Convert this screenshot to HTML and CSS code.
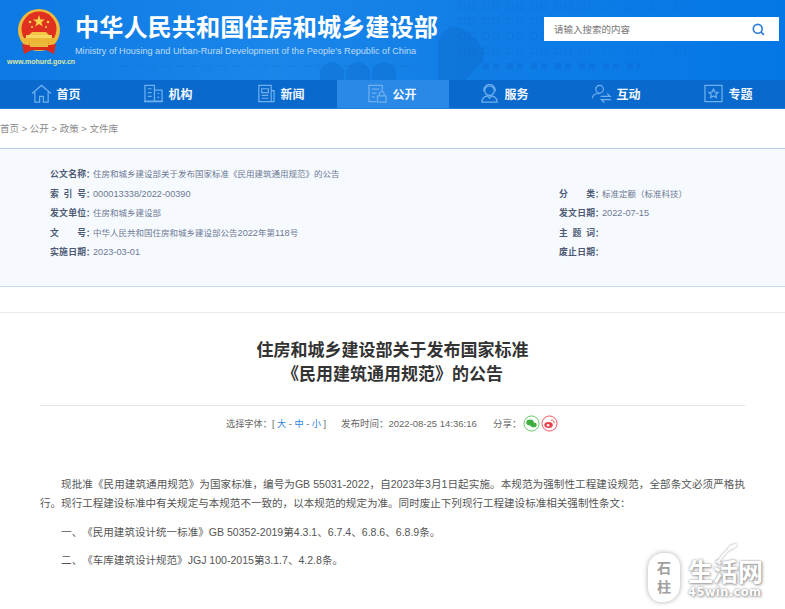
FILE: index.html
```html
<!DOCTYPE html>
<html lang="zh-CN">
<head>
<meta charset="utf-8">
<title>住房和城乡建设部关于发布国家标准《民用建筑通用规范》的公告</title>
<link rel="stylesheet" href="styles.css">
</head>
<body>
<header class="masthead">
  <svg class="skyline" viewBox="0 0 785 80" width="785" height="80" aria-hidden="true">
    <defs>
      <pattern id="win" x="0" y="0" width="24" height="15" patternUnits="userSpaceOnUse"><path d="M3 3h6v6H3zM13 3h6v6h-6z" fill="none" stroke="#0a66cf" stroke-width="1"/></pattern>
      <pattern id="win2" x="0" y="0" width="24" height="15" patternUnits="userSpaceOnUse"><path d="M3 3h6v6H3zM13 3h6v6h-6z" fill="#0a66cf"/></pattern>
    </defs>
    <rect x="456" y="2" width="120" height="54" fill="url(#win)" opacity=".3"/>
    <rect x="570" y="2" width="120" height="52" fill="url(#win)" opacity=".18"/>
    <rect x="480" y="56" width="160" height="14" fill="url(#win2)" opacity=".35"/>
    <path d="M438 80V42q8-20 22-14 14 6 22 20 6 12-6 20l-10 12z" fill="#0a62c4" opacity=".3"/>
    <path d="M320 80V70q6-8 12-8t12 8v10zM346 80V70q6-8 12-8t12 8v10zM372 80V70q6-8 12-8t12 8v10z" fill="#0a62c4" opacity=".3"/>
    <path d="M120 66h300" stroke="#0a62c4" stroke-width="1" stroke-dasharray="8 6" opacity=".2"/>
  </svg>
  <div class="brand">
    <div class="emblem-col">
      <svg class="emblem" viewBox="0 0 44 46" width="44" height="46">
        <circle cx="22" cy="21" r="21" fill="#efb93a"/>
        <circle cx="22" cy="20" r="17.500" fill="#e0301f"/>
        <polygon points="22,6 23.500,10.500 28,10.500 24.400,13.200 25.700,17.600 22,15 18.300,17.600 19.600,13.200 16,10.500 20.500,10.500" fill="#f6d34a"/>
        <circle cx="13" cy="13" r="1.300" fill="#f6d34a"/>
        <circle cx="31" cy="13" r="1.300" fill="#f6d34a"/>
        <circle cx="15" cy="18" r="1.100" fill="#f6d34a"/>
        <circle cx="29" cy="18" r="1.100" fill="#f6d34a"/>
        <path d="M15 23h14l3 3H12z" fill="#f3c445"/>
        <path d="M9 26h26v3H9z" fill="#f6d860"/>
        <path d="M7 29h30v5H7z" fill="#ecb534"/>
        <path d="M5 35l9 1.500h16l9-1.500-2 10-8-4H15l-8 4z" fill="#d92a1c"/>
        <path d="M13 34h18v4H13z" fill="#eab93c"/>
      </svg>
      <span class="site-url">www.mohurd.gov.cn</span>
    </div>
    <div class="brand-text">
      <div class="brand-zh">中华人民共和国住房和城乡建设部</div>
      <div class="brand-en">Ministry of Housing and Urban-Rural Development of the People's Republic of China</div>
    </div>
  </div>
  <div class="search">
    <span class="search-hint">请输入搜索的内容</span>
    <svg class="search-icon" viewBox="0 0 14 14" width="13" height="13"><circle cx="6.200" cy="6.200" r="4.800" fill="none" stroke="#2f7fd8" stroke-width="1.800"/><path d="M9.800 9.800l3 3" stroke="#2f7fd8" stroke-width="1.800"/></svg>
  </div>
</header>
<nav class="nav">
  <a class="nav-item"><svg class="nav-icon" viewBox="0 0 22 20"><path d="M1 10L11 1.500 21 10M4 8.500V19h5v-6h4v6h5V8.500" /></svg><span>首页</span></a>
  <a class="nav-item"><svg class="nav-icon" viewBox="0 0 22 20"><path d="M2 1.500h10V18H2zM12 6.500h8V18h-8M1 18.500h20M5 5h4M5 9h4M5 13h4M15 10h2M15 14h2"/></svg><span>机构</span></a>
  <a class="nav-item"><svg class="nav-icon" viewBox="0 0 22 20"><path d="M4 1.500h13V18.500H4zM7 5h7v4H7zM7 12h7M7 15h7M17 7h3v11.500h-3"/></svg><span>新闻</span></a>
  <a class="nav-item nav-item-active"><svg class="nav-icon" viewBox="0 0 22 20"><path d="M10 18.500H2V1.500h14v7M5 5.500h8M5 9.500h5M5 13.500h3M11 12.500h9v6.500h-9zM13 12.500v-2a2.500 2.500 0 0 1 5 0v2"/></svg><span>公开</span></a>
  <a class="nav-item"><svg class="nav-icon" viewBox="0 0 22 20"><circle cx="11" cy="7" r="5"/><path d="M5 8V6.500a6 6 0 0 1 12 0V8M3 19c0-4 3-6 6-6.500l2 2.500 2-2.500c3 .5 6 2.500 6 6.500z"/></svg><span>服务</span></a>
  <a class="nav-item"><svg class="nav-icon" viewBox="0 0 22 20"><circle cx="9" cy="5.500" r="4"/><path d="M1.500 15c0-3 3-5 7.500-5M10 13h10l-3-3M21 16.500H11l3 3"/></svg><span>互动</span></a>
  <a class="nav-item"><svg class="nav-icon" viewBox="0 0 22 20"><path d="M2 1.500h18v17H2z"/><path d="M11 5.500l1.500 3 3.200.4-2.300 2.200.6 3.200-3-1.600-3 1.600.6-3.200-2.300-2.200 3.200-.4z"/></svg><span>专题</span></a>
</nav>
<div class="crumbs">首页 &gt; 公开 &gt; 政策 &gt; 文件库</div>
<section class="meta">
  <div class="meta-row"><span class="meta-label">公文名称</span><span class="meta-colon">：</span><span class="meta-value">住房和城乡建设部关于发布国家标准《民用建筑通用规范》的公告</span></div>
  <div class="meta-row meta-split">
    <div class="meta-cell-left"><span class="meta-label">索引号</span><span class="meta-colon">：</span><span class="meta-num">000013338/2022-00390</span></div>
    <div class="meta-cell-right"><span class="meta-label">分类</span><span class="meta-colon">：</span><span class="meta-value">标准定额（标准科技）</span></div>
  </div>
  <div class="meta-row meta-split">
    <div class="meta-cell-left"><span class="meta-label">发文单位</span><span class="meta-colon">：</span><span class="meta-value">住房和城乡建设部</span></div>
    <div class="meta-cell-right"><span class="meta-label">发文日期</span><span class="meta-colon">：</span><span class="meta-num">2022-07-15</span></div>
  </div>
  <div class="meta-row meta-split">
    <div class="meta-cell-left"><span class="meta-label">文号</span><span class="meta-colon">：</span><span class="meta-value">中华人民共和国住房和城乡建设部公告<span class="meta-num">2022</span>年第<span class="meta-num">118</span>号</span></div>
    <div class="meta-cell-right"><span class="meta-label">主题词</span><span class="meta-colon">：</span></div>
  </div>
  <div class="meta-row meta-split">
    <div class="meta-cell-left"><span class="meta-label">实施日期</span><span class="meta-colon">：</span><span class="meta-num">2023-03-01</span></div>
    <div class="meta-cell-right"><span class="meta-label">废止日期</span><span class="meta-colon">：</span></div>
  </div>
</section>
<div class="meta-gap"></div>
<main class="article">
  <h1 class="title">住房和城乡建设部关于发布国家标准<br>《民用建筑通用规范》的公告</h1>
  <div class="tools">
    <span class="tool tool-font">选择字体：[ <a class="size">大</a> - <a class="size">中</a> - <a class="size">小</a> ]</span>
    <span class="tool tool-date">发布时间：2022-08-25 14:36:16</span>
    <span class="tool share">分享：
      <svg class="share-icon" viewBox="0 0 18 18" width="17" height="17"><circle cx="9" cy="9" r="8" fill="#fff" stroke="#5cc25c"/><ellipse cx="7.500" cy="8" rx="4" ry="3.200" fill="#3fae3f"/><ellipse cx="11.200" cy="10.500" rx="3.300" ry="2.600" fill="#3fae3f"/></svg>
      <svg class="share-icon" viewBox="0 0 18 18" width="17" height="17"><circle cx="9" cy="9" r="8" fill="#fff" stroke="#ee4a55"/><ellipse cx="8" cy="10.500" rx="4.500" ry="3.200" fill="#e6404c"/><circle cx="7.500" cy="10.800" r="1.400" fill="#fff"/><path d="M10.500 5.500c2.300-.5 3.800 1 3.300 3.200" fill="none" stroke="#e8503a"/></svg>
    </span>
  </div>
  <p class="para">现批准《民用建筑通用规范》为国家标准，编号为GB 55031-2022，自2023年3月1日起实施。本规范为强制性工程建设规范，全部条文必须严格执行。现行工程建设标准中有关规定与本规范不一致的，以本规范的规定为准。同时废止下列现行工程建设标准相关强制性条文：</p>
  <p class="para">一、《民用建筑设计统一标准》GB 50352-2019第4.3.1、6.7.4、6.8.6、6.8.9条。</p>
  <p class="para">二、《车库建筑设计规范》JGJ 100-2015第3.1.7、4.2.8条。</p>
</main>
<div class="watermark">
  <div class="wm-stone"><span>石</span><span>柱</span></div>
  <div class="wm-text">
    <svg class="wm-sprig" viewBox="0 0 24 20" width="24" height="20"><path d="M4 19C8 14 11 8 20 3" fill="none" stroke="#fff" stroke-width="2"/><path d="M14 6c1-4 5-5 9-5-1 4-4 6-9 5z" fill="#fff"/></svg>
    <div class="wm-zh">生活网</div>
    <div class="wm-en">45win.com</div>
  </div>
</div>
</body>
</html>
```
FILE: styles.css
```css
* { box-sizing: border-box; }
html, body { margin: 0; padding: 0; }
body {
  width: 785px;
  height: 609px;
  overflow: hidden;
  position: relative;
  background: #fff;
  font-family: "Liberation Sans", "Noto Sans CJK SC", sans-serif;
  color: #555;
  text-spacing-trim: space-all;
}
.masthead {
  position: relative;
  height: 80px;
  display: flex;
  justify-content: space-between;
  background: linear-gradient(90deg, #0d7ae4 0%, #1a86ea 35%, #117ee6 60%, #0477e6 100%);
  padding: 8px 6px 0 6px;
}
.skyline { position: absolute; left: 0; top: 0; filter: blur(.7px); }
.brand { position: relative; display: flex; }
.emblem-col { width: 69px; display: flex; flex-direction: column; align-items: flex-start; }
.emblem { margin: 1px 0 0 11px; }
.site-url { font-size: 7px; line-height: 8px; font-weight: bold; color: #dbe8a6; margin: 3px 0 0 1px; white-space: nowrap; }
.brand-text { padding-top: 6px; }
.brand-zh { font-size: 24.200px; line-height: 28px; font-weight: bold; color: #fff; white-space: nowrap; }
.brand-en { font-size: 9.150px; line-height: 12px; margin-top: 3px; color: #bfdcf8; white-space: nowrap; }
.search {
  position: relative;
  width: 235px;
  height: 24px;
  margin: 9px 0 0;
  background: #fff;
  display: flex;
  align-items: center;
  justify-content: space-between;
  padding: 0 14px 0 10px;
}
.search-hint { font-size: 9.500px; color: #777; }
.nav {
  height: 29px;
  background: #0a69cc;
  border-bottom: 1px solid #2280df;
  display: grid;
  grid-template-columns: repeat(7, 112px);
  padding-left: 1px;
}
.nav-item {
  display: flex;
  align-items: center;
  justify-content: center;
  gap: 4px;
  padding: 0 2px 1px 0;
  color: #f2f8ff;
  font-size: 12px;
  font-weight: bold;
}
.nav-item-active { background: #2a88e6; }
.nav-icon {
  width: 21px;
  height: 19px;
  fill: none;
  stroke: #6fb0ee;
  stroke-width: 1.300;
}
.crumbs { font-size: 9.500px; line-height: 12px; color: #8a8a8a; padding-top: 14px; height: 39px; }
.meta {
  height: 139px;
  background: #f6faff;
  border-top: 1px solid #b3cff0;
  border-bottom: 1px solid #c4dcf6;
  padding: 16px 50px 0;
  font-size: 8.500px;
  color: #6d7892;
}
.meta-gap { height: 26px; border-bottom: 1px solid #e9ebf0; }
.meta-row { height: 19.600px; line-height: 19.600px; white-space: nowrap; }
.meta-split { display: flex; }
.meta-cell-left { width: 509px; }
.meta-num { font-size: 9.200px; }
.meta-label {
  display: inline-block;
  width: 36px;
  height: 19px;
  font-weight: bold;
  font-size: 8.800px;
  color: #4e5a75;
  text-align: justify;
  text-align-last: justify;
  vertical-align: top;
}
.meta-colon {
  display: inline-block;
  width: 7px;
  font-weight: bold;
  color: #4e5a75;
  vertical-align: top;
}
.article { padding: 0 40px; }
.title {
  margin: 0;
  padding: 26px 0 18px;
  text-align: center;
  font-size: 17px;
  line-height: 24px;
  font-weight: bold;
  color: #333;
  border-bottom: 1px solid #e4e4ee;
}
.tools {
  display: flex;
  padding: 8px 0 0 186px;
  height: 69px;
  font-size: 9.500px;
  color: #666;
}
.tool { line-height: 20px; white-space: nowrap; }
.tool-font { width: 115px; font-size: 9.200px; }
.tool-date { width: 152px; }
.share { display: inline-flex; align-items: flex-start; }
.share-icon { margin-left: 1px; margin-top: 1px; }
.size { color: #2e82d8; }
.para {
  margin: 0 0 9.500px;
  font-size: 10.550px;
  line-height: 19px;
  color: #555;
  text-indent: 2em;
  text-align: justify;
}
.watermark {
  position: absolute;
  left: 648px;
  top: 553px;
  display: flex;
  align-items: flex-start;
  gap: 8px;
}
.wm-stone {
  width: 32px;
  height: 49px;
  border-radius: 48% 42% 50% 40% / 32% 28% 34% 30%;
  background: #fff;
  box-shadow: 0 0 5px #aaa;
  display: flex;
  flex-direction: column;
  align-items: center;
  justify-content: center;
  font-size: 14px;
  line-height: 19px;
  font-weight: bold;
  color: #a0a0a0;
}
.wm-text { position: relative; color: #fff; text-shadow: 0 0 2px #888, 1px 1px 3px #999; padding-top: 6px; }
.wm-sprig { position: absolute; left: 26px; top: -10px; filter: drop-shadow(0 0 1px #999); }
.wm-zh { font-size: 25px; line-height: 27px; font-weight: bold; white-space: nowrap; }
.wm-en { font-family: "DejaVu Sans", sans-serif; font-size: 11.500px; line-height: 12px; font-weight: bold; letter-spacing: .4px; white-space: nowrap; }
```
